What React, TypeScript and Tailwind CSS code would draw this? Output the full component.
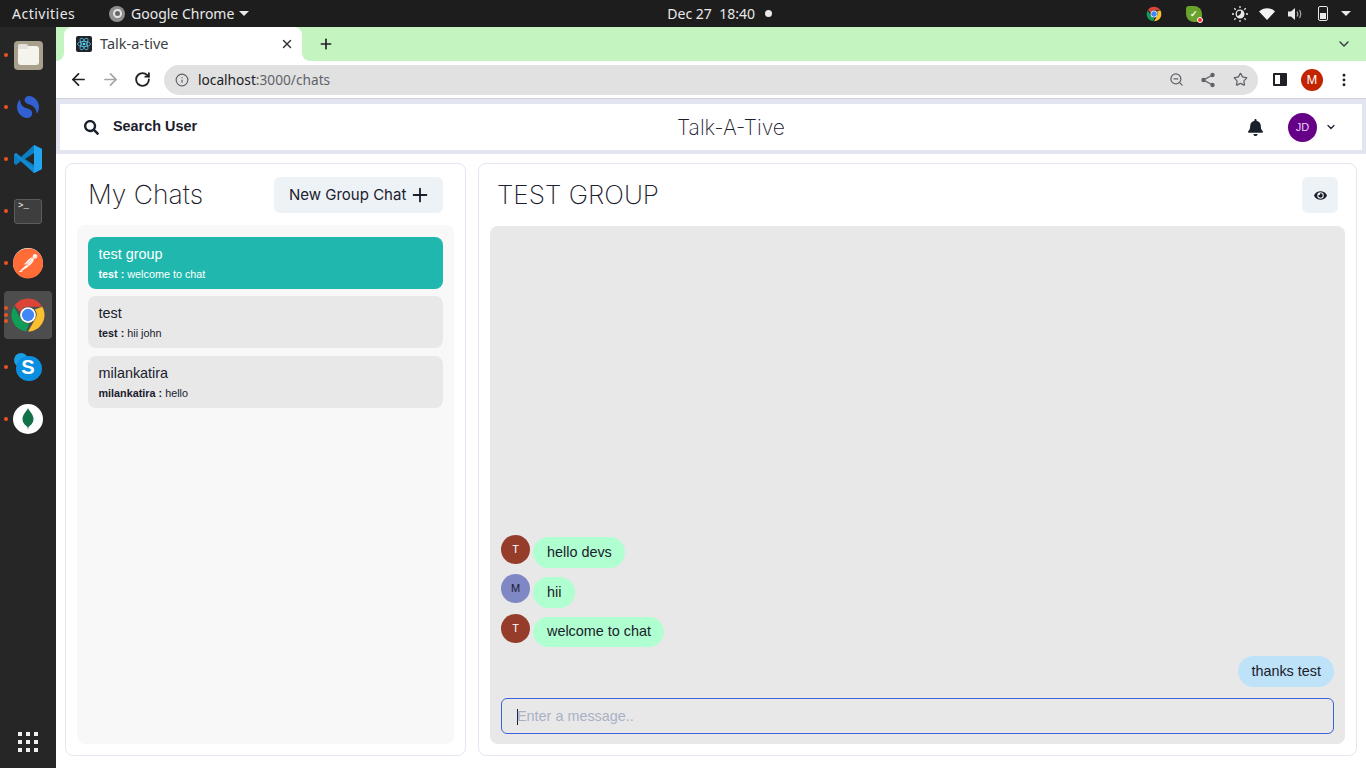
import React from 'react';
import { ArrowLeft, ArrowRight, ChevronDown, Info, MoreVertical, Plus, RotateCw, Star, X, ZoomOut } from 'lucide-react';
import { FaBell, FaEye, FaSearch } from 'react-icons/fa';
import { SiPostman, SiSimplenote } from 'react-icons/si';

const ChromeIcon = ({ size }: { size: number }) => (
  <svg width={size} height={size} viewBox="0 0 48 48">
    <path d="M24 2a22 22 0 0 1 19.05 11H24a11 11 0 0 0-10.3 7.2L5.95 11.4A22 22 0 0 1 24 2z" fill="#db4437" />
    <path d="M43.05 13A22 22 0 0 1 24 46l9.5-16.5A11 11 0 0 0 33 16.5z" fill="#fbc02d" />
    <path d="M5.2 12.5 14.5 29.5A11 11 0 0 0 26 34.8L21.5 46A22 22 0 0 1 5.2 12.5z" fill="#0f9d58" />
    <circle cx="24" cy="24" r="10.5" fill="#fff" />
    <circle cx="24" cy="24" r="8.2" fill="#4285f4" />
  </svg>
);

const ReactIcon = () => (
  <svg width="16" height="16" viewBox="0 0 16 16" className="rounded-[2px] bg-[#20232a]">
    <g fill="none" stroke="#61dafb" strokeWidth="0.7">
      <ellipse cx="8" cy="8" rx="6.5" ry="2.6" />
      <ellipse cx="8" cy="8" rx="6.5" ry="2.6" transform="rotate(60 8 8)" />
      <ellipse cx="8" cy="8" rx="6.5" ry="2.6" transform="rotate(120 8 8)" />
    </g>
    <circle cx="8" cy="8" r="1.3" fill="#61dafb" />
  </svg>
);

const VsCode = () => (
  <svg width="30" height="30" viewBox="0 0 30 30">
    <path d="M21 1 29 5v20l-8 4-13-12-5 4-2-1.500V10.500L3 9l5 4z" fill="#0a7fc4" />
    <path d="M21 1 29 5v20l-8 4z" fill="#22a5ee" />
    <path d="M21 9 12 15l9 6z" fill="#262626" />
    <path d="M3 9 21 24v5L1 11z" fill="#1489d2" />
  </svg>
);

const ShareIcon = () => (
  <svg width="16" height="16" viewBox="0 0 16 16" className="ml-[16px]">
    <path d="M12.500 3 3.500 8l9 5" fill="none" stroke="#5f6368" strokeWidth="1.400" />
    <circle cx="12.500" cy="3" r="2.200" fill="#5f6368" />
    <circle cx="3.500" cy="8" r="2.200" fill="#5f6368" />
    <circle cx="12.500" cy="13" r="2.200" fill="#5f6368" />
  </svg>
);

const Dot = ({ top }: { top: number }) => (
  <span className="absolute left-[4px] h-[4px] w-[4px] rounded-full bg-[#e95420]" style={{ top }} />
);

const DockItem = ({ children, active, dots = 1 }: { children: React.ReactNode; active?: boolean; dots?: number }) => (
  <div className="relative flex h-[52px] w-[56px] items-center justify-center">
    {active && <div className="absolute left-[4px] top-[2px] h-[48px] w-[48px] rounded-[4px] bg-[#4d4d4d]" />}
    {dots === 1 && <Dot top={24} />}
    {dots === 3 && (
      <>
        <Dot top={17} />
        <Dot top={24} />
        <Dot top={30} />
      </>
    )}
    <div className="relative flex items-center justify-center">{children}</div>
  </div>
);

const Dock = () => (
  <aside className="flex w-[56px] shrink-0 flex-col justify-between bg-[#262626] pt-[2px] pb-[16px]">
    <div className="flex flex-col">
      <DockItem>
        <div className="flex h-[29px] w-[29px] items-center justify-center rounded-[4px] bg-[#a8a08c]">
          <div className="relative mt-[1px] h-[19px] w-[21px] rounded-[3px] bg-[#f5f3ee]">
            <div className="absolute left-0 top-[-2px] h-[5px] w-[10px] rounded-t-[2px] bg-[#e4e1da]" />
          </div>
        </div>
      </DockItem>
      <DockItem>
        <div className="flex h-[22px] w-[22px] items-center justify-center">
          <SiSimplenote className="text-[22px] text-[#3360d0]" />
        </div>
      </DockItem>
      <DockItem>
        <VsCode />
      </DockItem>
      <DockItem>
        <div className="h-[25px] w-[28px] rounded-[3px] border border-[#5c5c5c] bg-[#3e3e3e] pl-[3px] pt-[1px] font-['Liberation_Mono',monospace] text-[9px] leading-[10px] text-white">
          &gt;_
        </div>
      </DockItem>
      <DockItem>
        <div className="flex h-[30px] w-[30px] items-center justify-center rounded-full bg-white">
          <SiPostman className="text-[31px] text-[#ff6c37]" />
        </div>
      </DockItem>
      <DockItem active dots={3}>
        <ChromeIcon size={36} />
      </DockItem>
      <DockItem>
        <div className="relative h-[28px] w-[28px]">
          <div className="absolute left-0 top-0 h-[14px] w-[14px] rounded-full bg-[#1ba0e6]" />
          <div className="absolute bottom-0 right-0 h-[25px] w-[26px] rounded-full bg-[#0a8fe0]" />
          <span className="absolute inset-0 flex items-center justify-center text-[20px] font-bold leading-none text-white">
            S
          </span>
        </div>
      </DockItem>
      <DockItem>
        <div className="flex h-[30px] w-[30px] items-center justify-center rounded-full bg-white">
          <svg width="12" height="22" viewBox="0 0 12 22">
            <path d="M6 0C6.500 2.500 11.500 6 11.500 11 11.500 15.500 8 17.500 6.500 19L6 22 5.500 19C4 17.500.5 15.500.5 11 .5 6 5.500 2.500 6 0z" fill="#13714a" />
          </svg>
        </div>
      </DockItem>
    </div>
    <div className="grid w-[20px] translate-x-[18px] grid-cols-3 gap-[4px]">
      {Array.from({ length: 9 }).map((_, i) => (
        <span key={i} className="h-[4px] w-[4px] bg-[#f0f0f0]" />
      ))}
    </div>
  </aside>
);

const TopBar = () => (
  <header className="flex h-[27px] shrink-0 items-center bg-[#1d1d1d] font-['Noto_Sans',sans-serif] text-[14px] text-[#e9e9e9]">
    <span className="ml-[12px] w-[97px] tracking-[0.5px]">Activities</span>
    <span className="flex h-[16px] w-[16px] items-center justify-center rounded-full bg-[#8e8e8e]">
      <span className="h-[9px] w-[9px] rounded-full border-2 border-[#e4e4e4] bg-[#666]" />
    </span>
    <span className="ml-[6px]">Google Chrome</span>
    <span className="ml-[5px] h-0 w-0 border-x-[5px] border-t-[5px] border-x-transparent border-t-[#e9e9e9]" />
    <div className="ml-[418px] flex w-[114px] items-center">
      <span>Dec 27&nbsp;&nbsp;18:40</span>
      <span className="ml-[10px] h-[7px] w-[7px] rounded-full bg-[#e9e9e9]" />
    </div>
    <div className="ml-[365px] flex items-center">
      <ChromeIcon size={16} />
      <span className="relative ml-[24px] flex h-[16px] w-[16px] items-center justify-center rounded-tl-[3px] rounded-tr-[8px] rounded-bl-[8px] rounded-br-[6px] bg-[#6aa32c] text-[9px] font-bold text-white">
        ✓
        <span className="absolute bottom-[-1px] right-[-1px] h-[6px] w-[6px] rounded-full border border-white bg-[#e33]" />
      </span>
      <svg width="16" height="16" viewBox="0 0 16 16" className="ml-[30px]" fill="none" stroke="#e9e9e9" strokeWidth="1.300">
        <circle cx="8" cy="8" r="3.800" />
        <path d="M9 4.500a3.800 3.800 0 1 1-4 5.500 4.500 4.500 0 0 0 4-5.500z" fill="#e9e9e9" stroke="none" />
        <path d="M8 0v2M8 14v2M0 8h2M14 8h2M2.300 2.300l1.400 1.400M12.300 12.300l1.400 1.400M2.300 13.700l1.400-1.400M12.300 3.700l1.400-1.400" />
      </svg>
      <svg width="16" height="12" viewBox="0 0 16 12" className="ml-[11px]">
        <path d="M0 3.500C4.500-1 11.500-1 16 3.500L8 12z" fill="#f2f2f2" />
      </svg>
      <svg width="15" height="14" viewBox="0 0 15 14" className="ml-[13px]">
        <path d="M0 4.500h3L7 1v12L3 9.500H0z" fill="#e9e9e9" />
        <path d="M9 4.500c1 1.500 1 3.500 0 5M11.500 3c1.500 2.500 1.500 5.500 0 8" fill="none" stroke="#aaa" strokeWidth="1.200" />
      </svg>
      <span className="ml-[15px] flex h-[15px] w-[10px] flex-col justify-end rounded-[2px] border border-[#e9e9e9] p-[1px]">
        <span className="h-[6px] w-full bg-[#e9e9e9]" />
      </span>
      <span className="ml-[13px] h-0 w-0 border-x-[5px] border-t-[5px] border-x-transparent border-t-[#e9e9e9]" />
    </div>
  </header>
);

const TabStrip = () => (
  <div className="flex h-[34px] shrink-0 items-end bg-[#c4f5c0] pl-[8px]">
    <div className="relative flex h-[34px] w-[238px] items-center rounded-t-[8px] bg-white pl-[12px] pr-[8px] font-['Noto_Sans',sans-serif] text-[14.500px] text-[#3c4043]">
      <span className="absolute bottom-0 left-[-8px] h-[8px] w-[8px] bg-white">
        <span className="block h-full w-full rounded-br-[8px] bg-[#c4f5c0]" />
      </span>
      <span className="absolute bottom-0 right-[-8px] h-[8px] w-[8px] bg-white">
        <span className="block h-full w-full rounded-bl-[8px] bg-[#c4f5c0]" />
      </span>
      <ReactIcon />
      <span className="ml-[8px] flex-1">Talk-a-tive</span>
      <X size={14} strokeWidth={2.5} className="text-[#303134]" />
    </div>
    <Plus size={16} strokeWidth={2.5} className="mb-[9px] ml-[16px] text-[#202124]" />
    <ChevronDown size={16} strokeWidth={2.2} className="mb-[9px] ml-auto mr-[14px] text-[#3c4043]" />
  </div>
);

const Toolbar = () => (
  <div className="flex h-[38px] shrink-0 items-center border-b border-[#cfd1d8] bg-white pl-[13px] pr-[12px]">
    <ArrowLeft size={19} strokeWidth={2.2} className="text-[#202124]" />
    <ArrowRight size={19} strokeWidth={2.2} className="ml-[13px] text-[#a3a5a8]" />
    <RotateCw size={17} strokeWidth={2.6} className="ml-[14px] text-[#202124]" />
    <div className="ml-[13px] flex h-[30px] w-[1094px] items-center rounded-full bg-[#e1e1e1] pl-[11px] pr-[10px] font-['Noto_Sans',sans-serif] text-[13.700px]">
      <Info size={14} strokeWidth={2} className="text-[#5f6368]" />
      <span className="ml-[9px] pt-[1px] text-[#202124]">localhost</span>
      <span className="pt-[1px] text-[#5f6368]">:3000/chats</span>
      <ZoomOut size={15} strokeWidth={2} className="ml-auto text-[#5f6368]" />
      <ShareIcon />
      <Star size={15} strokeWidth={2} className="ml-[17px] text-[#5f6368]" />
    </div>
    <span className="ml-[15px] flex h-[13px] w-[14px] rounded-[1px] border-2 border-[#202124] pl-[5px]">
      <span className="h-full w-full bg-[#202124]" />
    </span>
    <span className="ml-[14px] flex h-[22px] w-[22px] items-center justify-center rounded-full bg-[#c22400] font-['Noto_Sans',sans-serif] text-[12px] text-white">
      M
    </span>
    <MoreVertical size={16} strokeWidth={2.4} className="ml-[13px] text-[#202124]" />
  </div>
);

const AppHeader = () => (
  <div className="flex h-[46px] shrink-0 items-center bg-white pl-[24px] pr-[25px]">
    <FaSearch className="text-[15px] text-[#1a202c]" />
    <span className="ml-[14px] text-[14.400px] font-bold text-[#1a202c]">Search User</span>
    <span className="ml-[480px] pt-[1px] font-['Inter',sans-serif] text-[21px] font-extralight text-[#1a202c]">Talk-A-Tive</span>
    <FaBell className="ml-auto text-[17px] text-[#1a202c]" />
    <span className="ml-[24px] flex h-[29px] w-[29px] items-center justify-center rounded-full bg-[#660087] text-[11px] text-[#e9d5ff]">
      JD
    </span>
    <ChevronDown size={12} strokeWidth={2.5} className="ml-[8px] text-[#1a202c]" />
  </div>
);

const chats = [
  { name: 'test group', from: 'test', last: 'welcome to chat', on: true },
  { name: 'test', from: 'test', last: 'hii john', on: false },
  { name: 'milankatira', from: 'milankatira', last: 'hello', on: false },
];

const ChatList = () => (
  <section className="flex w-[401px] shrink-0 flex-col rounded-[8px] border border-[#e2e8f0] bg-white px-[11px] pt-[13px] pb-[11px]">
    <div className="flex h-[36px] items-center pl-[11px] pr-[11px]">
      <h2 className="font-['Inter',sans-serif] text-[26.500px] font-extralight text-[#1a202c]">My Chats</h2>
      <button className="ml-auto flex h-[36px] w-[169px] items-center rounded-[6px] bg-[#edf2f7] pl-[15px] font-['Inter',sans-serif] text-[15px] text-[#1a202c]">
        New Group Chat
        <Plus size={22} strokeWidth={2} className="ml-[3px]" />
      </button>
    </div>
    <div className="mt-[12px] flex flex-1 flex-col gap-[7.400px] rounded-[8px] bg-[#f8f8f8] p-[11px] pt-[12px]">
      {chats.map((c) => (
        <div key={c.name} className={`h-[52px] rounded-[8px] px-[10.500px] pt-[8px] ${c.on ? 'bg-[#20b8ae] text-white' : 'bg-[#e8e8e8] text-[#1a202c]'}`}>
          <div className="text-[14.400px] leading-[18px]">{c.name}</div>
          <div className="mt-[4px] text-[10.800px] leading-[14px]">
            <b>{c.from} : </b>
            {c.last}
          </div>
        </div>
      ))}
    </div>
  </section>
);

const Message = ({ initial, text, tone, mt, bubble }: { initial: string; text: string; tone: string; mt: string; bubble: string }) => (
  <div className={`flex items-start ${mt}`}>
    <span className={`flex h-[29px] w-[29px] shrink-0 items-center justify-center rounded-full text-[11px] ${tone}`}>{initial}</span>
    <span className={`ml-[3px] flex min-w-[42px] items-center rounded-full bg-[#b0ffd0] pl-[14px] pr-[13px] text-[14.400px] text-[#1a202c] ${bubble}`}>{text}</span>
  </div>
);

const ChatPane = () => (
  <section className="ml-[12px] flex w-[879px] shrink-0 flex-col rounded-[8px] border border-[#e2e8f0] bg-white px-[11px] pt-[13px] pb-[11px]">
    <div className="flex h-[36px] items-center pl-[7px] pr-[7px]">
      <h2 className="font-['Inter',sans-serif] text-[26.100px] font-extralight text-[#1a202c]">TEST GROUP</h2>
      <button className="ml-auto flex h-[36px] w-[36px] items-center justify-center rounded-[6px] bg-[#edf2f7] text-[13px] text-[#1a202c]">
        <FaEye />
      </button>
    </div>
    <div className="mt-[13px] flex flex-1 flex-col justify-end rounded-[8px] bg-[#e8e8e8] px-[11px] pb-[10px]">
      <Message initial="T" text="hello devs" tone="bg-[#963c2a] text-white" mt="" bubble="mt-[2px] h-[31px]" />
      <Message initial="M" text="hii" tone="bg-[#7f87c4] text-[#1a202c]" mt="mt-[6px]" bubble="mt-[3px] h-[31px]" />
      <Message initial="T" text="welcome to chat" tone="bg-[#963c2a] text-white" mt="mt-[6px]" bubble="mt-[3px] h-[30px]" />
      <div className="mt-[9px] flex justify-end">
        <span className="flex h-[31px] items-center rounded-full bg-[#bee3f8] px-[13px] text-[14.400px] text-[#1a202c]">thanks test</span>
      </div>
      <div className="mt-[11px] flex h-[36px] items-center rounded-[6px] border border-[#3f63d6] pl-[15px] pt-[1px] text-[14.400px] text-[#a9b1c6]">
        <span className="mr-[-1px] h-[16px] w-[1px] bg-[#1a202c]" />
        Enter a message..
      </div>
    </div>
  </section>
);

export default function App() {
  return (
    <div className="flex h-[768px] w-[1366px] flex-col overflow-hidden bg-white font-['Liberation_Sans',sans-serif]">
      <TopBar />
      <div className="flex min-h-0 flex-1">
        <Dock />
        <main className="flex min-w-0 flex-1 flex-col">
          <TabStrip />
          <Toolbar />
          <div className="flex min-h-0 flex-1 flex-col">
            <div className="shrink-0 border-x-[4px] border-t-[5px] border-b-[4px] border-[#e2e4f0] bg-white">
              <AppHeader />
            </div>
            <div className="flex min-h-0 flex-1 pl-[9px] pt-[9px] pb-[12px]">
              <ChatList />
              <ChatPane />
            </div>
          </div>
        </main>
      </div>
    </div>
  );
}
